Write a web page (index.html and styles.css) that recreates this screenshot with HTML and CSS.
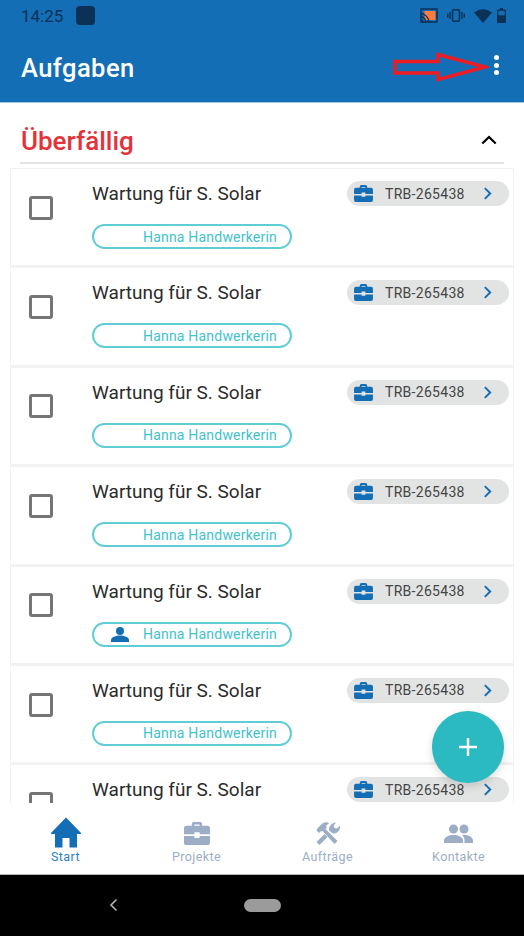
FILE: index.html
```html
<!DOCTYPE html>
<html lang="de">
<head>
<meta charset="utf-8">
<title>Aufgaben</title>
<link rel="stylesheet" href="styles.css">
</head>
<body>
<svg class="defs" width="0" height="0">
  <symbol id="case" viewBox="0 0 20 18"><path fill-rule="evenodd" d="M6 3V2a2 2 0 0 1 2-2h4a2 2 0 0 1 2 2v1h4a2 2 0 0 1 2 2v4.500h-8V8H8v1.500H0V5a2 2 0 0 1 2-2zm2 0h4V2H8zM0 11h8v1.500h4V11h8v5a2 2 0 0 1-2 2H2a2 2 0 0 1-2-2z"/></symbol>
  <symbol id="chev" viewBox="0 0 8 12"><path d="M1.500 1l5 5-5 5" fill="none" stroke="currentColor" stroke-width="1.800"/></symbol>
</svg>
<div class="screen">
  <header class="appbar">
    <div class="status">
      <span class="time">14:25</span>
      <span class="notif"></span>
      <span class="status-icons">
        <svg width="18" height="15" viewBox="0 0 18 15"><rect x="1" y="1" width="16" height="13" fill="none" stroke="#0a3156" stroke-width="1.500"/><rect x="4.500" y="3" width="11" height="9" fill="#ff7a3d"/><path d="M0 5.500a9 9 0 0 1 9 9M0 8.500a6 6 0 0 1 6 6M0 11.500a3 3 0 0 1 3 3" fill="none" stroke="#0a3156" stroke-width="1.300"/></svg>
        <svg class="vib" width="18" height="13" viewBox="0 0 18 13"><rect x="5.500" y=".8" width="7" height="11.400" rx="1.200" fill="none" stroke="#0a3156" stroke-width="1.500"/><path d="M3 3v7M15 3v7M.7 4.500v4M17.300 4.500v4" stroke="#0a3156" stroke-width="1.400"/></svg>
        <svg class="wifi" width="18" height="14" viewBox="0 0 18 14"><path d="M0 3.500Q9-3 18 3.500L9 14z" fill="#0a3156"/></svg>
        <svg width="9" height="15" viewBox="0 0 9 15"><path d="M3 0h3v1.500h2a1 1 0 0 1 1 1V14a1 1 0 0 1-1 1H1a1 1 0 0 1-1-1V2.500a1 1 0 0 1 1-1h2z" fill="#0a3156"/><rect x="1.300" y="2.800" width="6.400" height="4.500" fill="#136eb5"/></svg>
      </span>
    </div>
    <div class="toolbar">
      <h1 class="page-title">Aufgaben</h1>
      <span class="more"><i></i><i></i><i></i></span>
    </div>
    <svg class="arrow" width="96" height="30" viewBox="0 0 96 30"><path d="M2 9.500h43V2.500L92 15 45 27.500V21H2z" fill="none" stroke="#ee1c25" stroke-width="3.400"/></svg>
  </header>

  <section class="section-head">
    <h2 class="section-title">Überfällig</h2>
    <svg class="collapse" width="16" height="10" viewBox="0 0 16 10"><path d="M1.300 8.500L8 2l6.700 6.500" fill="none" stroke="#000" stroke-width="2.200"/></svg>
  </section>

  <main class="list">
    <article class="row"><span class="check"></span><div class="body"><div class="task">Wartung für S. Solar</div><div class="assignee"><span class="slot"></span><span>Hanna Handwerkerin</span></div></div><div class="ref"><svg class="ref-case"><use href="#case"/></svg><span class="ref-text">TRB-265438</span><svg class="ref-chev"><use href="#chev"/></svg></div></article>
    <article class="row"><span class="check"></span><div class="body"><div class="task">Wartung für S. Solar</div><div class="assignee"><span class="slot"></span><span>Hanna Handwerkerin</span></div></div><div class="ref"><svg class="ref-case"><use href="#case"/></svg><span class="ref-text">TRB-265438</span><svg class="ref-chev"><use href="#chev"/></svg></div></article>
    <article class="row"><span class="check"></span><div class="body"><div class="task">Wartung für S. Solar</div><div class="assignee"><span class="slot"></span><span>Hanna Handwerkerin</span></div></div><div class="ref"><svg class="ref-case"><use href="#case"/></svg><span class="ref-text">TRB-265438</span><svg class="ref-chev"><use href="#chev"/></svg></div></article>
    <article class="row"><span class="check"></span><div class="body"><div class="task">Wartung für S. Solar</div><div class="assignee"><span class="slot"></span><span>Hanna Handwerkerin</span></div></div><div class="ref"><svg class="ref-case"><use href="#case"/></svg><span class="ref-text">TRB-265438</span><svg class="ref-chev"><use href="#chev"/></svg></div></article>
    <article class="row"><span class="check"></span><div class="body"><div class="task">Wartung für S. Solar</div><div class="assignee"><span class="slot"><svg width="18" height="15" viewBox="0 0 18 15"><circle cx="9" cy="4" r="4" fill="#136eb5"/><path d="M0 15v-2c0-3 5-4.500 9-4.500s9 1.500 9 4.500v2z" fill="#136eb5"/></svg></span><span>Hanna Handwerkerin</span></div></div><div class="ref"><svg class="ref-case"><use href="#case"/></svg><span class="ref-text">TRB-265438</span><svg class="ref-chev"><use href="#chev"/></svg></div></article>
    <article class="row"><span class="check"></span><div class="body"><div class="task">Wartung für S. Solar</div><div class="assignee"><span class="slot"></span><span>Hanna Handwerkerin</span></div></div><div class="ref"><svg class="ref-case"><use href="#case"/></svg><span class="ref-text">TRB-265438</span><svg class="ref-chev"><use href="#chev"/></svg></div></article>
    <article class="row"><span class="check"></span><div class="body"><div class="task">Wartung für S. Solar</div></div><div class="ref"><svg class="ref-case"><use href="#case"/></svg><span class="ref-text">TRB-265438</span><svg class="ref-chev"><use href="#chev"/></svg></div></article>
  </main>

  <button class="fab" aria-label="Neu"><svg width="18" height="18" viewBox="0 0 18 18"><path d="M9 0v18M0 9h18" stroke="#fff" stroke-width="2.400"/></svg></button>

  <nav class="tabs">
    <div class="tab active"><svg class="tab-icon" width="30" height="30" viewBox="0 0 30 30"><path d="M15 0L0 15.500v1h4V30h7.500v-9.500h7V30H26V16.500h4v-1z"/></svg><span>Start</span></div>
    <div class="tab"><svg class="tab-icon" width="26" height="23" viewBox="0 0 20 18"><use href="#case"/></svg><span>Projekte</span></div>
    <div class="tab"><svg class="tab-icon" width="26" height="24" viewBox="0 0 26 24"><path d="M22.500 19.500L10.500 7.500l1.500-1.500-1-1.500 3-3C11.500 0 8.500.7 6.500 2.700L2.500 6.700l-1 2.300L4 11.500l1.500-1.500 2-.5 12 13z"/><path d="M1.500 20.500L9.500 12.500l3 3-8 8zM14 9c-.5-3.500 2-7.500 7-8l-2.500 3.500 1 2 2.500.5 3-3c.8 4.500-2.800 8.500-7 8z"/></svg><span>Aufträge</span></div>
    <div class="tab"><svg class="tab-icon" width="29" height="19" viewBox="0 0 29 19"><circle cx="9.500" cy="5" r="4.500"/><circle cx="20" cy="5" r="4.500"/><path d="M0 19v-2.500c0-3.500 5-5.500 9.500-5.500s9.500 2 9.500 5.500V19zM20.500 19v-3c0-2-.8-3.500-2.500-4.700.8-.2 1.500-.3 2-.3 4.500 0 9 2 9 5.500V19z"/></svg><span>Kontakte</span></div>
  </nav>
  <footer class="sysnav">
    <svg class="back" width="9" height="14" viewBox="0 0 9 14"><path d="M7.500 1.500L2 7l5.500 5.500" fill="none" stroke="#b5b5b5" stroke-width="1.600"/></svg>
    <span class="pill"></span>
  </footer>
</div>
</body>
</html>
```

FILE: styles.css
```css
* { box-sizing: border-box; }
html, body { margin: 0; padding: 0; }
body { width: 524px; height: 936px; overflow: hidden; background: #fff; font-family: Roboto, sans-serif; }
.defs { position: absolute; }
.screen { position: relative; width: 524px; height: 936px; display: flex; flex-direction: column; }

.appbar { position: relative; height: 103px; flex: none; background: #136eb5; border-bottom: 1px solid #9fc4e0; }
.status { height: 32px; padding: 6px 16px 0 21px; display: flex; align-items: flex-start; }
.time { font-size: 17px; line-height: 20px; color: #0a3156; }
.notif { width: 19px; height: 19px; margin-left: 13px; border-radius: 4px; background: #0a3156; }
.status-icons { margin-left: auto; display: flex; align-items: flex-start; gap: 9px; padding-top: 2px; margin-right: 2px; }
.vib { margin-top: 1px; }
.wifi { margin-top: 1px; margin-right: -4px; }
.toolbar { height: 70px; padding: 0 25px 0 21px; display: flex; align-items: center; justify-content: space-between; }
.page-title { margin: 1px 0 0; font-size: 25.500px; font-weight: 500; color: #fff; letter-spacing: .45px; }
.more { display: flex; flex-direction: column; gap: 2.500px; margin-bottom: 4px; }
.more i { width: 5px; height: 5px; border-radius: 50%; background: #fff; display: block; }
.arrow { position: absolute; left: 393px; top: 52px; }

.section-head { height: 61px; flex: none; margin: 0 20px; padding: 0 7px 0 1px; border-bottom: 2px solid #e3e3e3; display: flex; align-items: center; justify-content: space-between; }
.section-title { margin: 17px 0 0; font-size: 26px; font-weight: 500; color: #e2333b; }
.collapse { margin-top: 15px; }

.list { flex: 1 1 0; min-height: 0; overflow: hidden; margin-top: 4px; padding: 0 10px; }
.row { height: 99.4px; background: #fff; border: solid #f2f2f2; border-width: 1px 1px 2px 1px; padding: 14px 5px 0 18px; display: flex; align-items: flex-start; }
.check { flex: none; width: 24px; height: 24px; margin-top: 12.600px; border: 3px solid #757575; border-radius: 3px; }
.body { flex: none; width: 200px; margin-left: 39px; }
.task { font-size: 19px; line-height: 22px; color: #2b2b2b; white-space: nowrap; }
.assignee { margin-top: 19px; width: 200px; height: 25px; border: 2px solid #5fcdd4; border-radius: 13px; display: flex; align-items: center; font-size: 14px; color: #3fc3cc; letter-spacing: .2px; white-space: nowrap; }
.slot { flex: none; width: 49px; padding-left: 17px; display: flex; align-items: center; }
.ref { flex: none; width: 162px; height: 25px; margin: -2px 0 0 55px; padding: 0 0 0 7px; background: #e2e4e3; border-radius: 13px; display: flex; align-items: center; color: #444; }
.ref-case { width: 19px; height: 17px; fill: #136eb5; flex: none; }
.ref-text { margin-left: 12px; font-size: 14px; letter-spacing: .3px; white-space: nowrap; }
.ref-chev { width: 9px; height: 13px; margin-left: 18px; color: #136eb5; flex: none; }

.fab { position: absolute; left: 432px; top: 711px; width: 71.500px; height: 71.500px; border: 0; border-radius: 50%; background: #2bb9c2; box-shadow: 0 3px 8px rgba(0,0,0,.15); display: flex; align-items: center; justify-content: center; padding: 0; }

.tabs { flex: none; height: 72px; background: #fff; display: grid; grid-template-columns: repeat(4, 1fr); border-bottom: 1px solid #b5b5b5; }
.tab { display: flex; flex-direction: column; align-items: center; color: #9caec5; font-size: 12.500px; letter-spacing: .4px; padding-top: 18px; }
.tab .tab-icon { fill: #9caec5; height: 25px; }
.tab span { margin-top: 3px; line-height: 15px; }
.tab.active { color: #2b80c1; }
.tab.active .tab-icon { fill: #136eb5; height: 31px; margin-top: -4px; }
.tab.active span { margin-top: 1px; }

.sysnav { flex: none; height: 61px; background: #000; display: flex; align-items: center; padding: 0 0 0 109px; }
.back { margin-bottom: 1px; }
.pill { width: 37px; height: 13px; margin-left: 126px; border-radius: 7px; background: #9b9b9b; }
```
